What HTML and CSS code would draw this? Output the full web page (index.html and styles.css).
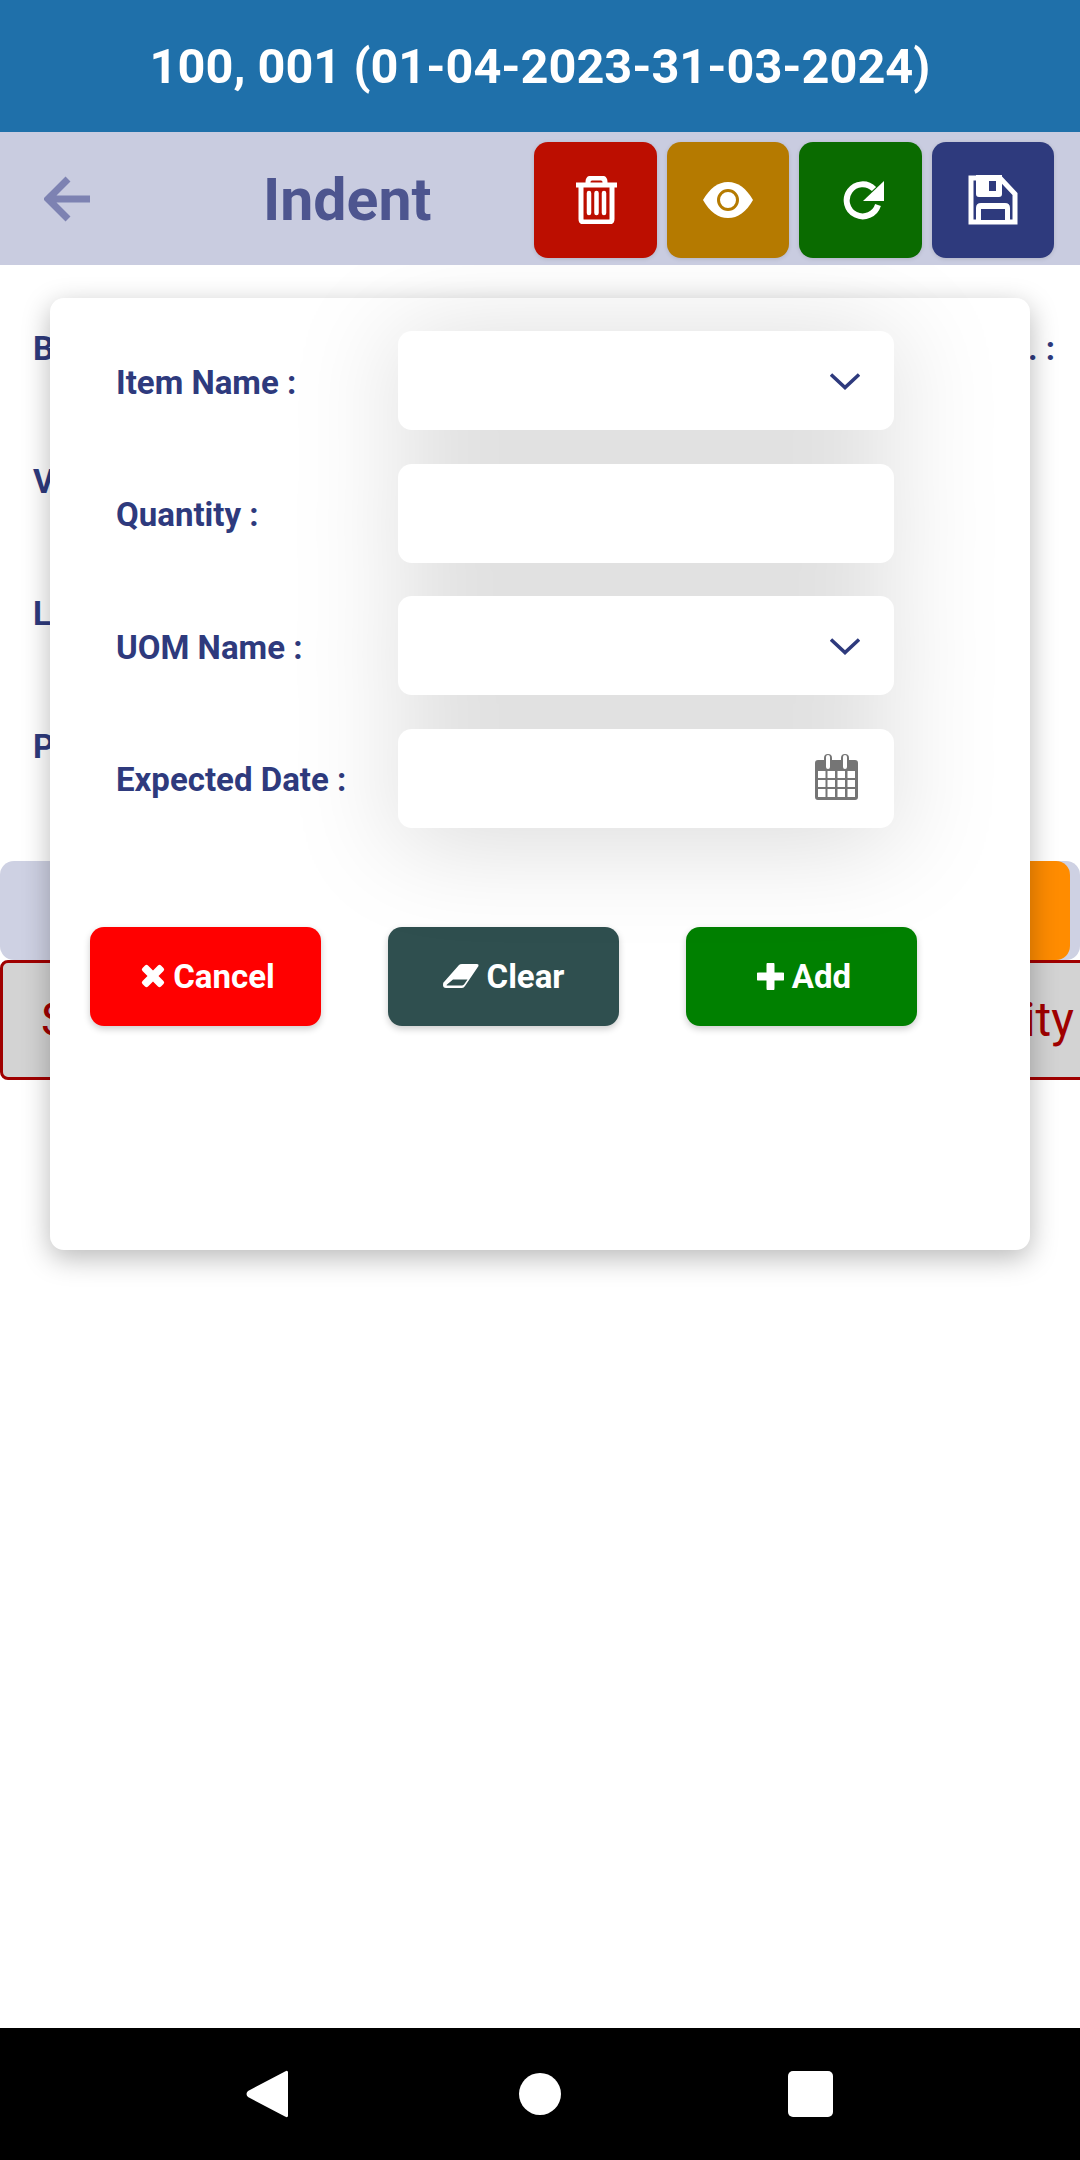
FILE: index.html
```html
<!DOCTYPE html>
<html lang="en">
<head>
    <meta charset="UTF-8">
    <title>Indent</title>
    <link rel="stylesheet" href="styles.css">
</head>
<body>
    <div class="page">
        <div class="top-bar">100, 001 (01-04-2023-31-03-2024)</div>
        <div class="sub-bar">
            <svg class="back-icon" viewBox="0 0 48 46"><path d="M46 23H6M24 3L4 23l20 20"/></svg>
            <div class="sub-title">Indent</div>
            <div class="tool-buttons">
                <button class="tool-btn tool-delete">
                    <svg width="43" height="48" viewBox="0 0 43 48"><path class="line" d="M1 9h41M13 8V6q0-4 4-4h9q4 0 4 4v2M6 9v34q0 3 3 3h25q3 0 3-3V9"/><path class="line thin" d="M14 17v20M21.500 17v20M29 17v20"/></svg>
                </button>
                <button class="tool-btn tool-view">
                    <svg width="50" height="36" viewBox="0 0 50 36"><path class="solid" d="M0 18C7 6 15 0 25 0s18 6 25 18c-7 12-15 18-25 18S7 30 0 18z"/><circle class="eye-ring" cx="25" cy="18" r="9.500"/></svg>
                </button>
                <button class="tool-btn tool-refresh">
                    <svg width="41" height="40" viewBox="0 0 41 40"><path class="line wide" d="M31 8A16 16 0 1 0 35 24"/><path class="solid" d="M41 0v20H20z"/></svg>
                </button>
                <button class="tool-btn tool-save">
                    <svg width="50" height="50" viewBox="0 0 50 50"><path class="line" d="M3 3h29l15 16v28H3z"/><path class="solid" d="M8 0h26v19q0 3-3 3H11q-3 0-3-3zM8 33q0-5 5-5h24q5 0 5 5v15H8z"/><path class="cut" d="M21 6h7v10h-7zM13 34h24v11H13z"/></svg>
                </button>
            </div>
        </div>

        <div class="main">
            <div class="info-row"><span>B</span><span>. :</span></div>
            <div class="info-row"><span>V</span></div>
            <div class="info-row"><span>L</span></div>
            <div class="info-row"><span>P</span></div>
            <div class="band"><div class="band-btn"></div></div>
            <div class="table-head"><span>S</span><span>ity</span></div>
        </div>

        <div class="modal">
            <div class="form">
                <div class="labels">
                    <div class="label">Item Name :</div>
                    <div class="label">Quantity :</div>
                    <div class="label">UOM Name :</div>
                    <div class="label">Expected Date :</div>
                </div>
                <div class="fields">
                    <div class="field">
                        <svg class="chevron" viewBox="0 0 30 17"><path d="M1 1.500l14 13 14-13"/></svg>
                    </div>
                    <div class="field"></div>
                    <div class="field">
                        <svg class="chevron" viewBox="0 0 30 17"><path d="M1 1.500l14 13 14-13"/></svg>
                    </div>
                    <div class="field">
                        <svg class="calendar" viewBox="0 0 43 46">
                            <path class="cal-body" fill-rule="evenodd" d="M3 6h6V4q0-4 4-4t4 4v2h9V4q0-4 4-4t4 4v2h6q3 0 3 3v34q0 3-3 3H3q-3 0-3-3V9q0-3 3-3zM11 3v10q0 2 2 2t2-2V3q0-2-2-2t-2 2zM28 3v10q0 2 2 2t2-2V3q0-2-2-2t-2 2zM3 17v7h7.500v-7zM12.500 17v7h7.500v-7zM22.500 17v7h7.500v-7zM32.500 17v7h7.500v-7zM3 26v7h7.500v-7zM12.500 26v7h7.500v-7zM22.500 26v7h7.500v-7zM32.500 26v7h7.500v-7zM3 35v8h7.500v-8zM12.500 35v8h7.500v-8zM22.500 35v8h7.500v-8zM32.500 35v8h7.500v-8z"/>
                        </svg>
                    </div>
                </div>
            </div>
            <div class="actions">
                <button class="action-btn action-cancel">
                    <svg width="24" height="24" viewBox="0 0 24 24"><path class="solid" d="M7 1.500l5 5 5-5q1.500-1.500 3 0l2.500 2.500q1.500 1.500 0 3l-5 5 5 5q1.500 1.500 0 3L20 22.500q-1.500 1.500-3 0l-5-5-5 5q-1.500 1.500-3 0L1.500 20q-1.500-1.500 0-3l5-5-5-5q-1.500-1.500 0-3L4 1.500q1.500-1.500 3 0z"/></svg>
                    Cancel
                </button>
                <button class="action-btn action-clear">
                    <svg width="36" height="24" viewBox="0 0 36 24"><path class="solid" fill-rule="evenodd" d="M16 1q1-1 3-1h15q2 0 1.500 2L22 22q-1 2-3 2H3q-3 0-3-3t1-3zM4 20.500q-1 1 0 1h15q1 0 2-1l3.500-5H10z"/></svg>
                    Clear
                </button>
                <button class="action-btn action-add">
                    <svg width="27" height="27" viewBox="0 0 27 27"><path class="line plus" d="M13.500 2v23M2 13.500h23"/></svg>
                    Add
                </button>
            </div>
        </div>

        <div class="nav-bar">
            <svg class="nav-back" viewBox="0 0 42 48"><path d="M39 1.500q3-2 3 1v43q0 3-3 1L2 27q-3-3 0-6z"/></svg>
            <div class="nav-home"></div>
            <div class="nav-square"></div>
        </div>
    </div>
</body>
</html>
```

FILE: styles.css
```css
* {
    box-sizing: border-box;
}
body {
    margin: 0;
    font-family: Roboto, "Liberation Sans", sans-serif;
    background-color: white;
}
.page {
    position: relative;
    width: 1080px;
    height: 2160px;
    display: flex;
    flex-direction: column;
    overflow: hidden;
}
button {
    border: none;
    padding: 0;
    font-family: inherit;
}

/* top bars */
.top-bar {
    height: 132px;
    background-color: #1f70aa;
    color: white;
    font-size: 48.700px;
    font-weight: 700;
    display: flex;
    align-items: center;
    justify-content: center;
}
.sub-bar {
    position: relative;
    z-index: 5;
    height: 133px;
    background-color: #c9cce0;
    display: flex;
    align-items: center;
    padding-left: 44px;
}
.back-icon {
    width: 48px;
    height: 46px;
}
.back-icon path {
    fill: none;
    stroke: #7d82b2;
    stroke-width: 7;
}
.sub-title {
    margin-left: 171px;
    padding-top: 2px;
    font-size: 59px;
    font-weight: 700;
    color: #4d558f;
}
.tool-buttons {
    position: absolute;
    top: 10px;
    right: 26px;
    display: flex;
    gap: 10px;
}
.tool-btn {
    width: 122.500px;
    height: 116px;
    border-radius: 14px;
    display: flex;
    align-items: center;
    justify-content: center;
    box-shadow: 0 1px 4px rgba(0,0,0,0.12);
}
.tool-delete { background-color: #bc0e00; }
.tool-view { background-color: #b57a00; }
.tool-refresh { background-color: #0a6b00; }
.tool-save { background-color: #2e3a7d; }
.tool-delete svg { margin-left: 2px; }
.tool-refresh svg { margin-left: 7px; margin-top: 2px; }

/* icon parts */
.line {
    fill: none;
    stroke: white;
    stroke-width: 5;
}
.thin { stroke-width: 4.500; stroke-linecap: round; }
.wide { stroke-width: 6; }
.plus { stroke-width: 8; stroke-linecap: round; }
.solid { fill: white; }
.cut { fill: #2e3a7d; }
.eye-ring {
    fill: white;
    stroke: #b57a00;
    stroke-width: 3;
}

/* page behind the dialog */
.main {
    flex: 1;
    padding-top: 17px;
}
.info-row {
    height: 132.700px;
    padding: 0 25px 0 33px;
    display: flex;
    justify-content: space-between;
    align-items: center;
    font-size: 33px;
    font-weight: 700;
    color: #2e3a7d;
}
.band {
    height: 99px;
    margin-top: 48px;
    padding-right: 10px;
    background-color: #ced1e3;
    border-radius: 14px;
    display: flex;
    justify-content: flex-end;
}
.band-btn {
    width: 100px;
    background-color: #ff8c00;
    border-radius: 14px;
}
.table-head {
    height: 120px;
    width: 1100px;
    padding: 0 23px 0 38px;
    border: 3px solid #a00000;
    border-radius: 8px;
    background-color: #d3d3d3;
    color: #a00000;
    font-size: 48px;
    display: flex;
    justify-content: space-between;
    align-items: center;
}

/* dialog */
.modal {
    position: absolute;
    z-index: 3;
    top: 298px;
    left: 50px;
    width: 980px;
    height: 952px;
    padding-top: 33px;
    background: white;
    border-radius: 14px;
    box-shadow: 0 8px 28px rgba(0,0,0,0.28);
}
.form {
    display: flex;
}
.labels {
    width: 348px;
    padding-left: 66px;
    display: flex;
    flex-direction: column;
    gap: 33.500px;
}
.label {
    height: 99px;
    padding-top: 3px;
    display: flex;
    align-items: center;
    font-size: 33px;
    font-weight: 700;
    color: #2e3a7d;
}
.fields {
    width: 496px;
    display: flex;
    flex-direction: column;
    gap: 33.500px;
    filter: drop-shadow(0 10px 52px rgba(0,0,0,0.16));
}
.field {
    height: 99px;
    background: white;
    border-radius: 14px;
    display: flex;
    align-items: center;
    justify-content: flex-end;
}
.chevron {
    width: 30px;
    height: 17px;
    margin-right: 34px;
    margin-top: 1px;
}
.chevron path {
    fill: none;
    stroke: #2e3a7d;
    stroke-width: 3.500;
}
.calendar {
    width: 43px;
    height: 46px;
    margin-right: 36px;
    margin-top: -2px;
}
.cal-body { fill: #757575; }

.actions {
    display: flex;
    gap: 67px;
    padding-left: 40px;
    margin-top: 99px;
}
.action-btn {
    width: 231px;
    height: 99px;
    border-radius: 14px;
    color: white;
    font-size: 33px;
    font-weight: 700;
    display: flex;
    align-items: center;
    justify-content: center;
    gap: 8px;
    box-shadow: 0 3px 7px rgba(0,0,0,0.2);
}
.action-cancel { background-color: #ff0000; padding-left: 5px; }
.action-clear { background-color: #2f4f4f; }
.action-add { background-color: #008000; padding-left: 5px; }

/* android nav */
.nav-bar {
    position: relative;
    z-index: 6;
    height: 132px;
    background-color: black;
    display: flex;
    align-items: center;
    padding-left: 246px;
}
.nav-back {
    width: 42px;
    height: 48px;
    fill: white;
}
.nav-home {
    width: 42px;
    height: 42px;
    margin-left: 231px;
    border-radius: 50%;
    background: white;
}
.nav-square {
    width: 45px;
    height: 46px;
    margin-left: 227px;
    border-radius: 5px;
    background: white;
}
```
